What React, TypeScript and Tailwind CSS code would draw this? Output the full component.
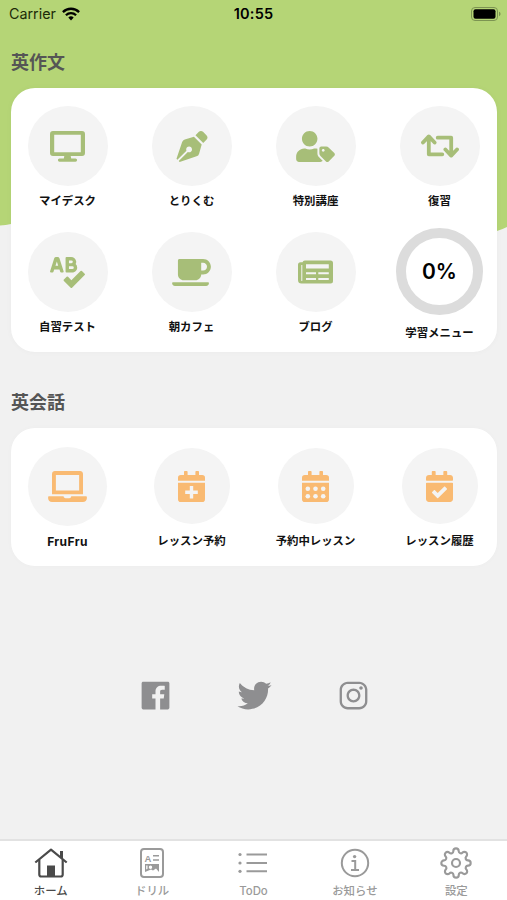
import type { ReactNode } from 'react'
import { FaCalendarCheck, FaCoffee, FaLaptop, FaPenNib, FaSpellCheck, FaUserTag } from 'react-icons/fa'
import { IoLogoFacebook, IoLogoInstagram, IoLogoTwitter } from 'react-icons/io'
import { FiSettings } from 'react-icons/fi'

interface MenuItem {
  label: string
  icon: ReactNode
  size?: string
  labelClass?: string
}

function DesktopIcon() {
  return (
    <svg className="w-[35px] h-[31px]" viewBox="0 0 35 31" fill="currentColor">
      <path
        fillRule="evenodd"
        d="M3 0h29a3 3 0 0 1 3 3v19a3 3 0 0 1-3 3H3a3 3 0 0 1-3-3V3a3 3 0 0 1 3-3Zm1.2 3.8v17.4h26.6V3.8Z"
      />
      <path d="M14.5 24h6l.7 3.5h4.3a1.6 1.6 0 0 1 0 3.2h-16a1.6 1.6 0 0 1 0-3.2h4.3Z" />
    </svg>
  )
}

function RepeatIcon() {
  return (
    <svg
      className="w-[38px] h-6"
      viewBox="0 0 38 24"
      fill="none"
      stroke="currentColor"
      strokeWidth="3.8"
      strokeLinecap="round"
      strokeLinejoin="round"
    >
      <path d="M2 8.5 7.8 2.4l5.8 6.1M7.8 4v16.3h13.5" />
      <path d="M36 15.5 30.2 21.6l-5.8-6.1M30.2 20V3.7H16.7" />
    </svg>
  )
}

function NewspaperIcon() {
  return (
    <svg className="w-[35px] h-6" viewBox="0 0 35 24" fill="currentColor">
      <path
        fillRule="evenodd"
        d="M7 .5h25.500a2.500 2.500 0 0 1 2.500 2.500v18a2.500 2.500 0 0 1-2.500 2.500H3.500A3.500 3.500 0 0 1 0 20V4.800A2.500 2.500 0 0 1 2.500 2.300H4.500A2.500 2.500 0 0 1 7 .5ZM8 4.200v4.200h22.800V4.200ZM8 12.200v2h10v-2Zm12.300 0v2h10.500v-2ZM8 17.900v2h10v-2Zm12.300 0v2h10.500v-2ZM3.300 5v15.500a.5.5 0 0 0 1 0V5Z"
      />
    </svg>
  )
}

function CalendarIcon({ children }: { children: ReactNode }) {
  return (
    <svg className="w-[27px] h-[31px]" viewBox="0 0 27 31">
      <path
        fill="currentColor"
        d="M6 .8a.8.8 0 0 1 .8-.8h2a.8.8 0 0 1 .8.800V4h7.800V.8a.8.8 0 0 1 .8-.8h2a.8.8 0 0 1 .8.800V4h3.200A2.800 2.800 0 0 1 27 6.800v3H0v-3A2.800 2.800 0 0 1 2.800 4H6ZM0 11.800h27v16.400a2.800 2.800 0 0 1-2.800 2.800H2.800A2.800 2.800 0 0 1 0 28.200Z"
      />
      {children}
    </svg>
  )
}

function HomeIcon() {
  return (
    <svg className="w-[34px] h-[30px]" viewBox="0 0 34 30" fill="none" stroke="currentColor" strokeWidth="2.2">
      <path d="M1.300 14.500 17 1.700l15.700 12.800" strokeLinejoin="round" />
      <path d="M5.300 11.500V26.500a2 2 0 0 0 2 2h19.400a2 2 0 0 0 2-2V11.500" />
      <path d="M27.500 3V10" strokeWidth="3" />
      <path d="M13 17.500h8V28h-8Z" fill="currentColor" stroke="none" />
    </svg>
  )
}

function DrillIcon() {
  return (
    <svg className="w-6 h-[30px]" viewBox="0 0 24 30" fill="none" stroke="currentColor" strokeWidth="2">
      <rect x="1" y="1" width="22" height="28" rx="3" />
      <text
        x="4.600"
        y="13.500"
        fill="currentColor"
        stroke="none"
        className="text-[9.500px] font-bold font-['Liberation_Sans',sans-serif]"
      >
        A
      </text>
      <path d="M13 7.800h6M13 12h6" strokeWidth="1.500" />
      <path
        fillRule="evenodd"
        fill="currentColor"
        stroke="none"
        d="M5 16h14v8l-3-3.500-3 2-2-1-6 2.500ZM10.500 17.500a1.700 1.700 0 1 0 0 3.400 1.700 1.700 0 0 0 0-3.400ZM6.200 17.500v4l1.300-.8v-3.200Z"
      />
    </svg>
  )
}

function TodoIcon() {
  return (
    <svg className="w-[30px] h-[30px]" viewBox="0 0 30 30" stroke="currentColor" strokeWidth="2">
      <path d="M8.500 6.500H29M8.500 15H29M8.500 23.300H29" />
      <g fill="currentColor" stroke="none">
        <circle cx="2" cy="6.500" r="1.600" />
        <circle cx="2" cy="15" r="1.600" />
        <circle cx="2" cy="23.300" r="1.600" />
      </g>
    </svg>
  )
}

function InfoIcon() {
  return (
    <svg className="w-[30px] h-[30px]" viewBox="0 0 30 30" fill="none" stroke="currentColor" strokeWidth="2">
      <circle cx="15" cy="15" r="13.200" />
      <circle cx="14.600" cy="8.600" r="1.700" fill="currentColor" stroke="none" />
      <path d="M11.500 13h3.700v9M11 22h8" />
    </svg>
  )
}

function WifiIcon() {
  return (
    <svg className="w-[18px] h-[14px]" viewBox="0 0 18 14" fill="none" stroke="currentColor" strokeWidth="2.300">
      <path d="M.9 5.100a11.500 11.500 0 0 1 16.200 0" />
      <path d="M3.900 8.200a7.300 7.300 0 0 1 10.200 0" />
      <path d="M6.300 10.600a3.900 3.900 0 0 1 5.400 0L9 13.500Z" fill="currentColor" stroke="none" />
    </svg>
  )
}

function BatteryIcon() {
  return (
    <svg className="w-[30px] h-[14px]" viewBox="0 0 30 14" fill="none">
      <rect x=".5" y=".5" width="26" height="13" rx="3.500" stroke="#7c9452" />
      <rect x="2.500" y="2.300" width="22" height="9.400" rx="2" fill="#000" />
      <path d="M28 4.800c2 .6 2 3.800 0 4.400Z" fill="#7c9452" />
    </svg>
  )
}

const writingMenu: MenuItem[] = [
  { label: 'マイデスク', icon: <DesktopIcon /> },
  { label: 'とりくむ', icon: <FaPenNib className="w-8 h-[31px]" /> },
  { label: '特別講座', icon: <FaUserTag className="w-[39px] h-[31px]" /> },
  { label: '復習', icon: <RepeatIcon /> },
  { label: '自習テスト', icon: <FaSpellCheck className="w-[35px] h-[31px]" /> },
  { label: '朝カフェ', icon: <FaCoffee className="w-[39px] h-[31px]" /> },
  { label: 'ブログ', icon: <NewspaperIcon /> },
]

const speakingMenu: MenuItem[] = [
  {
    label: 'FruFru',
    icon: <FaLaptop className="w-[39px] h-[31px]" />,
    size: 'w-[79px] h-[79px]',
    labelClass: 'text-[12px] tracking-[0.4px]',
  },
  {
    label: 'レッスン予約',
    icon: (
      <CalendarIcon>
        <path d="M13.500 15v12.600M7.200 21.300h12.600" stroke="#f4f4f4" strokeWidth="3.400" />
      </CalendarIcon>
    ),
    size: 'w-[76px] h-[76px]',
  },
  {
    label: '予約中レッスン',
    icon: (
      <CalendarIcon>
        <g fill="#f4f4f4">
          {[17.8, 25.3].map((y) => [5.8, 13.5, 21.2].map((x) => <circle key={`${x}-${y}`} cx={x} cy={y} r="2.300" />))}
        </g>
      </CalendarIcon>
    ),
    size: 'w-[76px] h-[76px]',
  },
  { label: 'レッスン履歴', icon: <FaCalendarCheck className="w-[27px] h-[31px]" />, size: 'w-[76px] h-[76px]' },
]

const tabs = [
  { label: 'ホーム', icon: <HomeIcon />, active: true },
  { label: 'ドリル', icon: <DrillIcon />, active: false },
  { label: 'ToDo', icon: <TodoIcon />, active: false },
  { label: 'お知らせ', icon: <InfoIcon />, active: false },
  { label: '設定', icon: <FiSettings className="w-8 h-8" strokeWidth={1.6} />, active: false },
]

function MenuButton({ label, icon, size = 'w-20 h-20', labelClass = 'text-[11.4px]' }: MenuItem) {
  return (
    <button className="flex flex-col items-center">
      <span className="h-20 flex items-center">
        <span className={`${size} rounded-full bg-[#f4f4f4] flex items-center justify-center`}>{icon}</span>
      </span>
      <span className={`mt-1.5 leading-[19px] font-bold text-[#111] whitespace-nowrap ${labelClass}`}>{label}</span>
    </button>
  )
}

export default function App() {
  return (
    <div className="relative w-[507px] h-[900px] overflow-hidden bg-[#f1f1f1] flex flex-col font-[Inter,'Noto_Sans_CJK_JP',sans-serif]">
      {/* 背景 */}
      <svg className="absolute top-0 left-0 w-[507px] h-[260px]" viewBox="0 0 507 260">
        <path d="M0 0h507v227q-5 2.500-10 4Q254 270 11 224q-5 1-11 1.500Z" fill="#b5d576" />
      </svg>

      <div className="relative flex-1 flex flex-col">
        {/* ステータスバー */}
        <div className="h-7 pl-[9px] pr-1.5 grid grid-cols-3 items-center text-black">
          <div className="flex items-center gap-1.5">
            <span className="text-[14.3px] leading-5 text-[#1c2b08]">Carrier</span>
            <WifiIcon />
          </div>
          <span className="-ml-[3px] text-center text-[14.5px] leading-5 font-semibold tracking-[0.2px]">10:55</span>
          <div className="flex justify-end">
            <BatteryIcon />
          </div>
        </div>

        {/* 英作文 */}
        <h2 className="mt-[21px] ml-[11px] text-lg leading-7 font-bold text-[#555]">英作文</h2>
        <div className="mt-[11px] mx-auto w-[486px] h-[264px] pt-[18px] rounded-[24px] bg-white grid grid-cols-[repeat(4,124px)] auto-rows-[126px] content-start justify-center text-[#a7be78] shadow-[0_0_6px_rgba(0,0,0,0.03)]">
          {writingMenu.map((item) => (
            <MenuButton key={item.label} {...item} />
          ))}
          <button className="-mt-1 flex flex-col items-center">
            <span className="w-[87px] h-[87px] rounded-full border-[10px] border-[#dcdcdc] flex items-center justify-center text-[21px] font-semibold text-black">
              0%
            </span>
            <span className="mt-[9px] text-[11.4px] leading-[19px] font-bold text-[#111] whitespace-nowrap">
              学習メニュー
            </span>
          </button>
        </div>

        {/* 英会話 */}
        <h2 className="mt-[37px] ml-[11px] text-lg leading-7 font-bold text-[#555]">英会話</h2>
        <div className="mt-[11px] mx-auto w-[486px] h-[138px] pt-[18px] rounded-[24px] bg-white grid grid-cols-[repeat(4,124px)] content-start justify-center text-[#f9ba72] shadow-[0_0_6px_rgba(0,0,0,0.02)]">
          {speakingMenu.map((item) => (
            <MenuButton key={item.label} {...item} />
          ))}
        </div>

        {/* SNS */}
        <div className="mt-[111px] ml-px flex justify-center gap-[62px] text-[#8e8e90]">
          <IoLogoFacebook className="w-[37px] h-[37px]" />
          <IoLogoTwitter className="w-[37px] h-[37px]" />
          <IoLogoInstagram className="w-[37px] h-[37px]" />
        </div>
      </div>

      {/* タブバー */}
      <nav className="relative h-[61px] border-t-2 border-[#e2e2e2] bg-white grid grid-cols-5">
        {tabs.map((tab) => (
          <button
            key={tab.label}
            className={`pt-[7px] flex flex-col items-center ${tab.active ? 'text-[#4a4a4a]' : 'text-[#9a9a9a]'}`}
          >
            <span className="h-[30px] flex items-center">{tab.icon}</span>
            <span className="mt-1 text-[11.4px] leading-[18px] font-medium">{tab.label}</span>
          </button>
        ))}
      </nav>
    </div>
  )
}
